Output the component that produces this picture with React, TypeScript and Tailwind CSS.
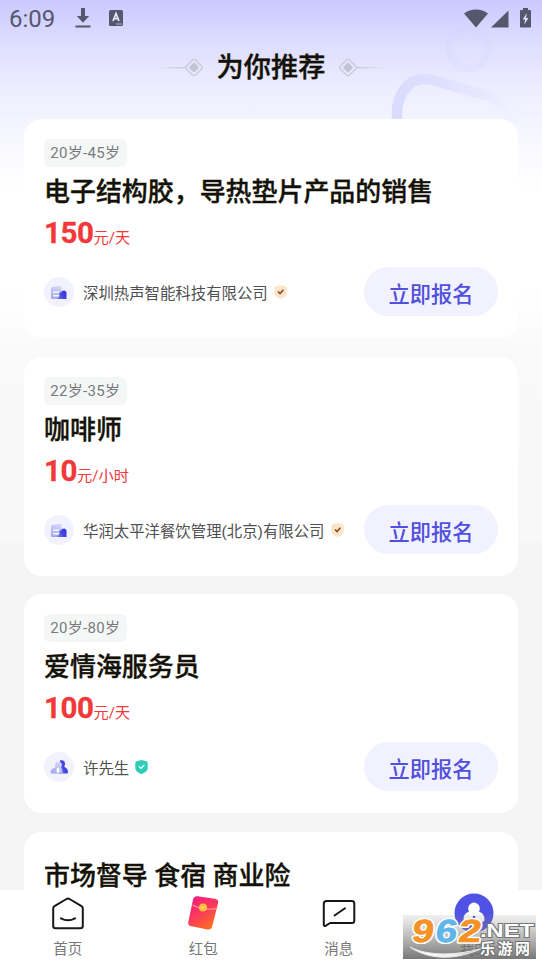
import type { ReactNode } from 'react';

type Job = {
  age?: string;
  title: string;
  price?: string;
  unit?: string;
  owner?: string;
  kind?: 'company' | 'person';
};

const JOBS: Job[] = [
  { age: '20岁-45岁', title: '电子结构胶，导热垫片产品的销售', price: '150', unit: '元/天', owner: '深圳热声智能科技有限公司', kind: 'company' },
  { age: '22岁-35岁', title: '咖啡师', price: '10', unit: '元/小时', owner: '华润太平洋餐饮管理(北京)有限公司', kind: 'company' },
  { age: '20岁-80岁', title: '爱情海服务员', price: '100', unit: '元/天', owner: '许先生', kind: 'person' },
  { title: '市场督导 食宿 商业险' },
];

function StatusBar() {
  return (
    <div className="flex h-9 items-center justify-between pl-[9px] pr-[10px] text-[#56566d]">
      <div className="flex items-center">
        <span className="w-[47px] pt-px text-[24px] leading-9">6:09</span>
        <svg width="16" height="22" viewBox="0 0 16 22" className="ml-[19px]" fill="currentColor">
          <path d="M6 1h4v8h4.2L8 15.800 1.800 9H6zM.5 18.500h15v2H.5z" />
        </svg>
        <svg width="14" height="16" viewBox="0 0 14 16" className="ml-[18px]">
          <rect width="14" height="16" rx="1.500" fill="currentColor" />
          <path d="M4 11 7 3.500 10 11M5 8.700h4" fill="none" stroke="#e5e5ff" strokeWidth="1.700" />
          <path d="M7 14h6" stroke="#b9b9d3" strokeWidth="1" />
        </svg>
      </div>
      <svg width="68" height="22" viewBox="0 0 68 22" fill="currentColor">
        <path d="M0 6.500C7 1.200 17 1.200 24 6.500L12 20.500z" />
        <path d="M27 20.500 44.500 3.500v17z" />
        <path d="M59 1h5v2h2.200c.5 0 .8.300.8.800v15.900c0 .5-.3.800-.8.800h-9.400c-.5 0-.8-.3-.8-.800V3.800c0-.5.3-.800.8-.800H59z" />
        <path d="M62.800 6 58.700 12.500h2.400L60.300 17.500 64.500 11h-2.500z" fill="#dedeff" />
      </svg>
    </div>
  );
}

function Diamond({ flip = false }: { flip?: boolean }) {
  return (
    <svg width="48" height="20" viewBox="0 0 48 20" className={flip ? '-scale-x-100' : ''}>
      <defs>
        <linearGradient id="tail" x1="0" x2="1">
          <stop offset="0" stopColor="#c6c6d8" stopOpacity="0" />
          <stop offset="1" stopColor="#c6c6d8" />
        </linearGradient>
      </defs>
      <rect x="1" y="9" width="28" height="1.300" fill="url(#tail)" />
      <rect x="31.600" y="3.100" width="12.800" height="12.800" rx="2.500" transform="rotate(45 38 9.500)" fill="none" stroke="#cbcbda" strokeWidth="1.500" />
      <rect x="34.400" y="5.900" width="7.200" height="7.200" rx="1" transform="rotate(45 38 9.500)" fill="#c3c3d1" />
    </svg>
  );
}

function HeaderArt() {
  return (
    <svg className="absolute left-[380px] top-0" width="162" height="125" viewBox="380 0 162 125" fill="none">
      <defs>
        <linearGradient id="art" gradientUnits="userSpaceOnUse" x1="390" y1="0" x2="518" y2="0">
          <stop offset="0" stopColor="#d9dbfe" />
          <stop offset=".4" stopColor="#dfe0fe" />
          <stop offset=".75" stopColor="#e8e9ff" />
          <stop offset="1" stopColor="#f0f1ff" stopOpacity=".2" />
        </linearGradient>
      </defs>
      <path d="M398 125C393 98 407 79 424 79C434 79 446 84 460 88L488 95.500C501 99 509 108 511 125" stroke="url(#art)" strokeWidth="10.500" />
      <circle cx="468.500" cy="49" r="19.500" stroke="#d2d3ff" strokeOpacity=".2" strokeWidth="7" />
    </svg>
  );
}

function Avatar({ kind }: { kind: 'company' | 'person' }) {
  return (
    <svg width="30" height="30" viewBox="0 0 30 30" className="mt-px shrink-0">
      <defs>
        <linearGradient id="soft" x1=".6" y1="0" x2=".3" y2="1">
          <stop offset="0" stopColor="#d5d6f8" />
          <stop offset="1" stopColor="#a5a6ef" />
        </linearGradient>
        <linearGradient id="deep" x1="1" y1=".3" x2="0" y2=".8">
          <stop offset="0" stopColor="#3435dd" />
          <stop offset=".5" stopColor="#4748e0" />
          <stop offset="1" stopColor="#8384ea" />
        </linearGradient>
      </defs>
      <circle cx="15" cy="15" r="15" fill="#f2f2ff" />
      {kind === 'company' ? (
        <>
          <path d="M7 11.300 8 10 16 8.800l1.500 1V22H8a1 1 0 0 1-1-1z" fill="url(#soft)" />
          <path d="M15.500 15.500h2V14l3-.500 2 1.500V22H12.500L15.500 19z" fill="url(#deep)" />
          <path d="M9 15.300h6M9 18.700h6" stroke="#f4f4ff" strokeWidth="1.500" />
        </>
      ) : (
        <>
          <path d="M16 8.500c3-1 5 .5 5 3 0 1.500-.5 2.500-.8 3.200 2.500 1 3.800 3 3.800 5.300 0 1-.7 1.500-1.700 1.500H14z" fill="url(#deep)" />
          <path d="M11 12.500a3.600 3.600 0 0 1 7 0c0 1.200-.4 2-1 2.800 1.200 1.200 1.600 3 1.600 6.200H8.200c-1 0-1.700-.4-1.700-1.500 0-2.300 2-4.200 5-4.800-.3-.7-.5-1.600-.5-2.700z" fill="url(#soft)" />
          <ellipse cx="14" cy="18.300" rx="1.500" ry="2.700" fill="#fff" />
        </>
      )}
    </svg>
  );
}

function Shield({ kind }: { kind: 'company' | 'person' }) {
  const company = kind === 'company';
  return (
    <svg width="13" height="14" viewBox="0 0 13 14" className="mt-px shrink-0">
      <path d="M6.500 0 11.500 1.300Q12.700 1.700 12.700 3V8c0 3-2.600 4.700-6.200 6C2.900 12.700.3 11 .3 8V3Q.3 1.700 1.500 1.300z" fill={company ? '#fde5ca' : '#2fcdb5'} />
      <path d="M4 6.500 6 8.500 9.400 4.800" fill="none" stroke={company ? '#874b24' : '#fff'} strokeWidth={company ? 1.600 : 1.200} />
    </svg>
  );
}

function JobCard({ job }: { job: Job }) {
  return (
    <article className={`h-[219px] shrink-0 rounded-[18px] bg-white px-5 ${job.age ? 'pt-5' : 'pt-[26px]'}`}>
      {job.age && (
        <div className="mb-[7px] flex h-7 w-[82.5px] items-center justify-center rounded-md bg-[#f5f7f7] pt-px text-[15px] tracking-[0.3px] text-[#777b7d]">
          {job.age}
        </div>
      )}
      <h2 className="h-9 whitespace-nowrap text-[25.95px] font-medium leading-9 text-[#141207] [-webkit-text-stroke:0.35px_#141207]">{job.title}</h2>
      {job.kind && (
        <>
          <p className="mt-[3px] flex h-10 items-baseline leading-[41px] text-[#f23838]">
            <span className="text-[29.5px] font-bold tracking-[-0.4px] [-webkit-text-stroke:0.3px_#f23838]">{job.price}</span>
            <span className="text-[15.2px]">{job.unit}</span>
          </p>
          <div className="mt-3.5 flex h-[49px] items-center">
            <Avatar kind={job.kind} />
            <span className="ml-[9px] mr-1.5 whitespace-nowrap pt-[7px] text-[15.4px] text-[#4f5052]">{job.owner}</span>
            <Shield kind={job.kind} />
            <button className="ml-auto h-full w-[134px] rounded-full bg-[#f2f1ff] pt-[7px] text-[21.2px] font-medium text-[#4f50dd]">立即报名</button>
          </div>
        </>
      )}
    </article>
  );
}

function Tab({ label, children }: { label: string; children: ReactNode }) {
  return (
    <div className="flex flex-1 flex-col items-center pt-px">
      <div className="flex h-[47px] items-start pt-[5px]">{children}</div>
      <span className="text-[14.5px] leading-6 text-[#777]">{label}</span>
    </div>
  );
}

function Watermark() {
  return (
    <svg className="absolute left-[403px] top-[25px] overflow-visible" width="133" height="44" viewBox="0 0 133 44">
      <defs>
        <linearGradient id="shade" x1="0" y1="0" x2="0" y2="1">
          <stop offset="0" stopColor="#888" stopOpacity=".12" />
          <stop offset="1" stopColor="#686868" stopOpacity=".9" />
        </linearGradient>
        <linearGradient id="swoosh" x1="0" x2="1">
          <stop offset="0" stopColor="#fff" />
          <stop offset=".65" stopColor="#eee" />
          <stop offset="1" stopColor="#999" />
        </linearGradient>
      </defs>
      <rect width="133" height="44" fill="url(#shade)" />
      <path d="M7 32C26 45 52 46 80 33C54 41 24 41 7 32z" fill="url(#swoosh)" stroke="#e8e8e8" strokeWidth="1" />
      <g transform="translate(7 26.500) skewX(-8)" fontFamily="'Liberation Sans', sans-serif" fontWeight="bold" fontSize="32" strokeLinejoin="round">
        <g stroke="#fff" strokeWidth="3.500" fill="#fff">
          <text x="1" y="0" textLength="21.500" lengthAdjust="spacingAndGlyphs">9</text>
          <text x="24.500" y="0" textLength="21.500" lengthAdjust="spacingAndGlyphs">6</text>
          <text x="47.500" y="0" textLength="22.500" lengthAdjust="spacingAndGlyphs">2</text>
        </g>
        <g strokeWidth=".7">
          <text x="1" y="0" fill="#f49225" stroke="#f49225" textLength="21.500" lengthAdjust="spacingAndGlyphs">9</text>
          <text x="24.500" y="0" fill="#5db5e9" stroke="#5db5e9" textLength="21.500" lengthAdjust="spacingAndGlyphs">6</text>
          <text x="47.500" y="0" fill="#f49225" stroke="#f49225" textLength="22.500" lengthAdjust="spacingAndGlyphs">2</text>
        </g>
      </g>
      <text x="77" y="22" fill="#fff" stroke="#777" strokeWidth="2" paintOrder="stroke" fontFamily="'Liberation Sans', sans-serif" fontWeight="bold" fontSize="19" textLength="54" lengthAdjust="spacingAndGlyphs">.NET</text>
      <text x="77" y="39" fill="#fff" stroke="#707070" strokeWidth="2" paintOrder="stroke" fontFamily="'Noto Sans CJK SC', sans-serif" fontWeight="bold" fontSize="15" textLength="50" lengthAdjust="spacing">乐游网</text>
    </svg>
  );
}

function TabBar() {
  return (
    <nav className="relative flex h-[75px] shrink-0 bg-white">
      <Tab label="首页">
        <svg width="34" height="36" viewBox="0 0 34 36" fill="none" stroke="#17181a" strokeWidth="2" strokeLinecap="round" strokeLinejoin="round">
          <path d="M15.500 3 3.500 10.200C2.600 10.700 2.200 11.400 2.200 12.400V30C2.200 31.500 3 32.300 4.500 32.300H29.500C31 32.300 31.800 31.500 31.800 30V12.400C31.800 11.400 31.400 10.700 30.500 10.200L18.500 3Q17 2.200 15.500 3z" />
          <path d="M10 22.300Q17 26.300 24 22.300" />
        </svg>
      </Tab>
      <Tab label="红包">
        <svg width="34" height="36" viewBox="0 0 34 36">
          <defs>
            <linearGradient id="packet" x1=".2" y1="0" x2=".8" y2="1">
              <stop offset="0" stopColor="#f51b82" />
              <stop offset=".5" stopColor="#fb3d58" />
              <stop offset="1" stopColor="#ff7519" />
            </linearGradient>
          </defs>
          <path d="M11.500.2 29 2.800Q32.800 3.500 32.100 7L26.300 30Q25.300 34.200 21.500 33.500L5.500 30.300Q1.400 29.500 2.300 26L7 3.700Q8-.200 11.500.200z" fill="url(#packet)" />
          <path d="M6.500 9Q17 15 31.500 12.500" fill="none" stroke="#ffb29d" strokeWidth="1" />
          <circle cx="17" cy="11.500" r="4" fill="#ffbd3d" />
          <path d="M14.500 10.500 17 12.500 19.500 10" fill="none" stroke="#ffe27a" strokeWidth="1" />
        </svg>
      </Tab>
      <Tab label="消息">
        <svg width="34" height="36" viewBox="0 0 34 36" fill="none" stroke="#17181a" strokeWidth="2" strokeLinecap="round" strokeLinejoin="round">
          <path d="M4.500 5H30Q32.300 5 32.300 7.500V24.500Q32.300 27 30 27H8L4 29.600Q1.800 30.800 1.800 28.500V7.500Q1.800 5 4.500 5z" />
          <path d="M12.500 19.500 23 12.300" />
        </svg>
      </Tab>
      <Tab label="我的">
        <svg width="40" height="40" viewBox="0 0 40 40" className="-mt-[3px]">
          <circle cx="20" cy="20" r="19.500" fill="#5051e5" />
          <path d="M20 9.500A6 6 0 0 1 25 18.500C29 20 30.500 23 30.500 26.500Q30.500 29 28 29H12Q9.500 29 9.500 26.500C9.500 23 11 20 15 18.500A6 6 0 0 1 20 9.500z" fill="#fff" />
          <circle cx="20" cy="24" r="1.300" fill="#5051e5" />
        </svg>
      </Tab>
      <Watermark />
    </nav>
  );
}

export default function App() {
  return (
    <div className="relative flex h-[965px] w-[542px] flex-col overflow-hidden bg-[linear-gradient(180deg,#c9c9ff_0px,#dcdcff_40px,#ececff_85px,#f5f5ff_125px,#ffffff_190px,#ffffff_290px,#f9f9f9_360px,#f8f8f8_542px,#f5f5f5_543px)] font-[Roboto,'Noto_Sans_CJK_SC',sans-serif]">
      <HeaderArt />
      <StatusBar />
      <header className="relative flex h-[83px] shrink-0 items-start justify-center gap-[13px] pt-3">
        <div className="flex h-[39px] items-center"><Diamond /></div>
        <h1 className="text-[27.2px] font-medium leading-10 text-[#141207] [-webkit-text-stroke:0.35px_#141207]">为你推荐</h1>
        <div className="flex h-[39px] items-center"><Diamond flip /></div>
      </header>
      <main className="relative flex min-h-0 flex-1 flex-col gap-[18.5px] overflow-hidden px-6">
        {JOBS.map((job) => <JobCard key={job.title} job={job} />)}
      </main>
      <TabBar />
    </div>
  );
}
